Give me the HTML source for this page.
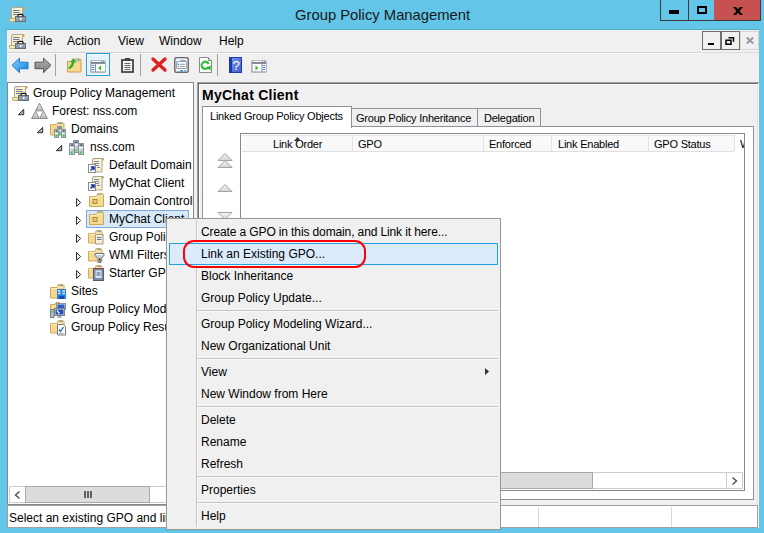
<!DOCTYPE html>
<html><head><meta charset="utf-8">
<style>
*{margin:0;padding:0;box-sizing:border-box}
html,body{width:764px;height:533px;overflow:hidden}
body{background:#63c5e7;position:relative;font-family:"Liberation Sans",sans-serif;font-size:12px;color:#000}
.a{position:absolute}
.t{position:absolute;white-space:nowrap;line-height:12px;font-size:12px}
.h{position:absolute;white-space:nowrap;line-height:11px;font-size:11px;letter-spacing:-0.22px}
svg{position:absolute;overflow:visible}
</style></head><body>

<!-- title bar -->
<svg style="left:9px;top:7px" width="17" height="15" viewBox="0 0 17 15">
 <path d="M2.5 1.5h11v10h-11z" fill="#f8f0c6" stroke="#b0a888"/>
 <path d="M2.5 1.5a1 1 0 0 1 1-1h10.5a1 1 0 0 1 0 2" fill="#fff8dc" stroke="#b0a888"/>
 <circle cx="14.3" cy="1.5" r="1.3" fill="#d8a050"/>
 <path d="M4 3.5h6.5M4 5.5h6.5M4 7.5h5" stroke="#7078a0"/>
 <path d="M0.5 11.5h6.5v3H1.5a1 1 0 0 1-1-1z" fill="#f4e6b0" stroke="#c0aa70"/>
 <rect x="6.5" y="9.5" width="10" height="5" fill="#8d99a7" stroke="#66707c"/>
 <path d="M7 11.5h9" stroke="#9aa6b4"/>
 <path d="M9 9.5v-1.2a1 1 0 0 1 1-1h3a1 1 0 0 1 1 1v1.2" fill="none" stroke="#1a1a1a" stroke-width="1.3"/>
 <rect x="11" y="11" width="1.5" height="2" fill="#fff"/>
</svg>
<div class="t" style="left:295px;top:8px;font-size:14.8px;line-height:15px;color:#1a1a1a">Group Policy Management</div>

<!-- caption buttons -->
<div class="a" style="left:660px;top:-1px;width:29px;height:22px;border:1px solid #3c3c3c;background:#63c5e7"></div>
<div class="a" style="left:688px;top:-1px;width:26px;height:22px;border:1px solid #3c3c3c;border-right:none;background:#63c5e7"></div>
<div class="a" style="left:714px;top:-1px;width:47px;height:22px;border:1px solid #3c3c3c;border-left:none;background:#c75050"></div>
<div class="a" style="left:669px;top:10px;width:10px;height:4px;background:#000"></div>
<div class="a" style="left:697px;top:6px;width:10px;height:8px;border:2px solid #000;border-top-width:2px"></div>
<svg style="left:733px;top:7px" width="10" height="8" viewBox="0 0 10 8"><path d="M0 0h3l2 2.3L7 0h3L6.5 4L10 8H7L5 5.7L3 8H0l3.5-4z" fill="#000"/></svg>

<!-- window client -->
<div class="a" style="left:7px;top:30px;width:752px;height:498px;background:#f0f0f0"></div>
<div class="a" style="left:6px;top:29px;width:753px;height:1px;background:#5aa9c8"></div>

<!-- menu bar -->
<div class="a" style="left:7px;top:52px;width:694px;height:1px;background:#d0d0d0"></div>
<div class="a" style="left:7px;top:53px;width:694px;height:1px;background:#fcfcfc"></div>
<div class="a" style="left:702px;top:52px;width:57px;height:1px;background:#dcdcdc"></div>
<svg style="left:9px;top:34px" width="17" height="15" viewBox="0 0 17 15">
 <path d="M2.5 1.5h11v10h-11z" fill="#f8f0c6" stroke="#b0a888"/>
 <path d="M2.5 1.5a1 1 0 0 1 1-1h10.5a1 1 0 0 1 0 2" fill="#fff8dc" stroke="#b0a888"/>
 <circle cx="14.3" cy="1.5" r="1.3" fill="#d8a050"/>
 <path d="M4 3.5h6.5M4 5.5h6.5M4 7.5h5" stroke="#7078a0"/>
 <path d="M0.5 11.5h6.5v3H1.5a1 1 0 0 1-1-1z" fill="#f4e6b0" stroke="#c0aa70"/>
 <rect x="6.5" y="9.5" width="10" height="5" fill="#8d99a7" stroke="#66707c"/>
 <path d="M7 11.5h9" stroke="#9aa6b4"/>
 <path d="M9 9.5v-1.2a1 1 0 0 1 1-1h3a1 1 0 0 1 1 1v1.2" fill="none" stroke="#1a1a1a" stroke-width="1.3"/>
 <rect x="11" y="11" width="1.5" height="2" fill="#fff"/>
</svg>
<div class="t" style="left:33px;top:35px">File</div>
<div class="t" style="left:67px;top:35px">Action</div>
<div class="t" style="left:118px;top:35px">View</div>
<div class="t" style="left:159px;top:35px">Window</div>
<div class="t" style="left:219px;top:35px">Help</div>

<!-- MDI buttons -->
<div class="a" style="left:702px;top:31px;width:19px;height:19px;border:1px solid #707070;background:#f0f0f0"></div>
<div class="a" style="left:721px;top:31px;width:19px;height:19px;border:1px solid #707070;background:#f0f0f0"></div>
<div class="a" style="left:740px;top:31px;width:19px;height:19px;border:1px solid #d6d6d6;background:#f0f0f0"></div>
<div class="a" style="left:708px;top:43px;width:6px;height:2px;background:#000"></div>
<svg style="left:725px;top:37px" width="10" height="9" viewBox="0 0 10 9"><path d="M3.5 0.75h5v4M1 3.25h5v4h-5z" fill="none" stroke="#000" stroke-width="1.5"/></svg>
<svg style="left:746px;top:37px" width="8" height="7" viewBox="0 0 8 7"><path d="M0.8 0.5L7.2 6.5M7.2 0.5L0.8 6.5" stroke="#8e9ba8" stroke-width="2"/></svg>

<!-- toolbar -->
<svg style="left:11px;top:57px" width="18" height="17" viewBox="0 0 18 17"><defs><linearGradient id="bg1" x1="0" y1="0" x2="1" y2="1"><stop offset="0" stop-color="#8ad4fa"/><stop offset="0.6" stop-color="#3aa4ec"/><stop offset="1" stop-color="#1a70c8"/></linearGradient></defs><path d="M1 8.3L8.5 1.2v4h8.5v6.5H8.5v4z" fill="url(#bg1)" stroke="#1c78cc" stroke-linejoin="round"/></svg>
<svg style="left:34px;top:57px" width="18" height="17" viewBox="0 0 18 17"><defs><linearGradient id="bg2" x1="0" y1="0" x2="0" y2="1"><stop offset="0" stop-color="#b4b4b4"/><stop offset="1" stop-color="#7a7a7a"/></linearGradient></defs><path d="M17 8.3L9.5 1.2v4H1v6.5h8.5v4z" fill="url(#bg2)" stroke="#555" stroke-linejoin="round"/></svg>
<div class="a" style="left:55px;top:54px;width:1px;height:22px;background:#a0a0a0"></div>
<svg style="left:67px;top:58px" width="15" height="15" viewBox="0 0 15 15"><path d="M0.5 3.5h7l1.2-2.5h4.3l1 1v12h-13.5z" fill="#f6d890" stroke="#c8a050"/><path d="M9.5 2.2h3.5" stroke="#58a4e0"/><path d="M2 10.5C3.5 9 6.5 8 6 3" stroke="#30b030" stroke-width="2.4" fill="none"/><path d="M3 4L6.5 0L9.5 4.5z" fill="#30b030"/></svg>
<div class="a" style="left:86px;top:53px;width:24px;height:23px;border:1px solid #26a0da;background:#e5f1fb;box-shadow:inset 0 0 0 1px #f4faff"></div>
<svg style="left:90px;top:60px" width="16" height="13" viewBox="0 0 16 13"><rect x="0.5" y="0.5" width="15" height="12" fill="#7a828a"/><path d="M1.5 1.5h9.5M12 1.5h1M14 1.5h0.8" stroke="#fff"/><rect x="1" y="3" width="14" height="9" fill="#8a9098"/><rect x="1.5" y="4" width="3.5" height="7.5" fill="#f8f8f8"/><rect x="6" y="4" width="9" height="7.5" fill="#fbfbfb"/><path d="M2.2 5.5h2M2.2 7.5h2M2.2 9.5h2" stroke="#3a7ac8" stroke-width="1"/><path d="M11 5.5v5l-3-2.5z" fill="#34c034"/></svg>
<svg style="left:121px;top:58px" width="13" height="15" viewBox="0 0 13 15"><rect x="1" y="2" width="11" height="12" fill="#f8f8f8" stroke="#444" stroke-width="1.8"/><rect x="4" y="0" width="5" height="3" fill="#444"/><path d="M3.5 5.5h6M3.5 7.5h6M3.5 9.5h6M3.5 11.5h6" stroke="#666"/></svg>
<div class="a" style="left:140px;top:54px;width:1px;height:22px;background:#a0a0a0"></div>
<svg style="left:151px;top:57px" width="16" height="15" viewBox="0 0 16 15"><path d="M2 2L14 13M14 2L2 13" stroke="#e02020" stroke-width="3.4" stroke-linecap="round"/></svg>
<svg style="left:174px;top:57px" width="15" height="16" viewBox="0 0 15 16"><rect x="0.75" y="0.75" width="13.5" height="14.5" rx="1.5" fill="#fdfdfd" stroke="#6c6c6c" stroke-width="1.5"/><path d="M2 1.8h10" stroke="#c8d4e0"/><path d="M2.5 4.5h10v7h-10z" fill="#fff" stroke="#93a3b8"/><path d="M6.5 4.5v-1h5v1" fill="none" stroke="#93a3b8"/><rect x="3.5" y="6.5" width="1.5" height="1.5" fill="#1a90f0"/><rect x="3.5" y="9" width="1.5" height="1.2" fill="#999"/><path d="M6 7.3h5M6 9.6h5" stroke="#9a9a9a"/><rect x="6" y="13" width="3" height="1.8" fill="#2aa8f0"/><rect x="10" y="13" width="2.5" height="1.8" fill="#aaa"/></svg>
<svg style="left:199px;top:57px" width="13" height="16" viewBox="0 0 13 16"><path d="M0.5 0.5h9l3 3v12h-12z" fill="#fbfbfb" stroke="#8a8a8a"/><path d="M9.5 0.5v3h3" fill="#e8e8e8" stroke="#8a8a8a"/><path d="M9.3 10.2A3.6 3.6 0 1 1 9.6 7" fill="none" stroke="#38c038" stroke-width="2.2"/><path d="M7.5 10.5L11.5 13.5L11.8 8.5z" fill="#22b022"/></svg>
<div class="a" style="left:217px;top:54px;width:1px;height:22px;background:#a0a0a0"></div>
<svg style="left:229px;top:57px" width="13" height="16" viewBox="0 0 13 16"><defs><linearGradient id="hg" x1="0" y1="0" x2="1" y2="1"><stop offset="0" stop-color="#7090f0"/><stop offset="1" stop-color="#4060c8"/></linearGradient></defs><rect x="0" y="0" width="13" height="16" fill="#1c3cb0"/><rect x="3" y="1" width="9" height="14" fill="url(#hg)"/><text x="7.3" y="13" font-family="Liberation Sans" font-size="13.5" fill="#fff" text-anchor="middle">?</text></svg>
<svg style="left:251px;top:60px" width="16" height="13" viewBox="0 0 16 13"><rect x="0.5" y="0.5" width="15" height="12" fill="#7a828a"/><path d="M1.5 1.5h9.5M12 1.5h1M14 1.5h0.8" stroke="#fff"/><rect x="1" y="3" width="14" height="9" fill="#8a9098"/><rect x="1.5" y="4" width="9" height="7.5" fill="#fbfbfb"/><rect x="11.5" y="4" width="3.5" height="7.5" fill="#f8f8f8"/><path d="M12.2 5.5h2M12.2 7.5h2M12.2 9.5h2" stroke="#3a7ac8" stroke-width="1"/><path d="M4.5 5.5v5l3-2.5z" fill="#34c034"/></svg>

<!-- tree pane -->
<div class="a" style="left:7px;top:82px;width:187px;height:423px;border:1px solid #828790;background:#fff"></div>


<!-- tree content -->
<div class="a" style="left:0;top:0;width:764px;height:533px;clip-path:polygon(8px 83px,193px 83px,193px 486px,8px 486px)">
<div class="a" style="left:86px;top:210px;width:103px;height:18px;background:#d7e8f8;border:1px solid #80a8d8"></div>
<svg style="left:12px;top:86px" width="17" height="15" viewBox="0 0 17 15">
 <path d="M2.5 1.5h11v10h-11z" fill="#f8f0c6" stroke="#b0a888"/>
 <path d="M2.5 1.5a1 1 0 0 1 1-1h10.5a1 1 0 0 1 0 2" fill="#fff8dc" stroke="#b0a888"/>
 <circle cx="14.3" cy="1.5" r="1.3" fill="#d8a050"/>
 <path d="M4 3.5h6.5M4 5.5h6.5M4 7.5h5" stroke="#7078a0"/>
 <path d="M0.5 11.5h6.5v3H1.5a1 1 0 0 1-1-1z" fill="#f4e6b0" stroke="#c0aa70"/>
 <rect x="6.5" y="9.5" width="10" height="5" fill="#8d99a7" stroke="#66707c"/>
 <path d="M7 11.5h9" stroke="#9aa6b4"/>
 <path d="M9 9.5v-1.2a1 1 0 0 1 1-1h3a1 1 0 0 1 1 1v1.2" fill="none" stroke="#1a1a1a" stroke-width="1.3"/>
 <rect x="11" y="11" width="1.5" height="2" fill="#fff"/>
</svg>
<div class="t" style="left:33px;top:87px">Group Policy Management</div>

<svg style="left:18px;top:109px" width="7" height="7" viewBox="0 0 7 7"><path d="M5.7 0.3V5.7H0.3z" fill="#b0b0b0" stroke="#303030" stroke-linejoin="round"/></svg>
<svg style="left:31px;top:103px" width="17" height="16" viewBox="0 0 17 16"><defs><linearGradient id="fg" x1="0" y1="0" x2="0" y2="1"><stop offset="0" stop-color="#f0f0f0"/><stop offset="1" stop-color="#b4b4b4"/></linearGradient></defs><path d="M8.5 0.3L12.4 7.8H4.6z" fill="url(#fg)" stroke="#8c8c8c"/><path d="M4.5 8.2L8.4 15.5H0.6z" fill="url(#fg)" stroke="#8c8c8c"/><path d="M12.5 8.2L16.4 15.5H8.6z" fill="url(#fg)" stroke="#8c8c8c"/></svg>
<div class="t" style="left:52px;top:105px">Forest: nss.com</div>

<svg style="left:37px;top:127px" width="7" height="7" viewBox="0 0 7 7"><path d="M5.7 0.3V5.7H0.3z" fill="#b0b0b0" stroke="#303030" stroke-linejoin="round"/></svg>
<svg style="left:50px;top:122px" width="17" height="16" viewBox="0 0 17 16"><defs><linearGradient id="sg" x1="0" y1="0" x2="1" y2="0"><stop offset="0" stop-color="#e4e9ee"/><stop offset="1" stop-color="#aab6c2"/></linearGradient></defs><path d="M0.5 2.5h6l1-2h5.5l1 1v11.5h-13.5z" fill="#f6d890" stroke="#d0aa58"/><path d="M8.5 1.5h4" stroke="#60a8e0"/><rect x="7.5" y="4.5" width="4" height="8" fill="url(#sg)" stroke="#8894a0"/><rect x="8.5" y="5.5" width="2" height="1.2" fill="#2a323a"/><rect x="8" y="8" width="3" height="1.5" fill="#f4f6f8"/><rect x="8.5" y="9.5" width="2" height="2" fill="#30d030"/><rect x="4.5" y="7.5" width="4" height="8" fill="url(#sg)" stroke="#8894a0"/><rect x="5.5" y="8.5" width="2" height="1.2" fill="#2a323a"/><rect x="5" y="11" width="3" height="1.5" fill="#f4f6f8"/><rect x="5.5" y="12.5" width="2" height="2" fill="#30d030"/><rect x="11.5" y="7.5" width="4" height="8" fill="url(#sg)" stroke="#8894a0"/><rect x="12.5" y="8.5" width="2" height="1.2" fill="#2a323a"/><rect x="12" y="11" width="3" height="1.5" fill="#f4f6f8"/><rect x="12.5" y="12.5" width="2" height="2" fill="#30d030"/></svg>
<div class="t" style="left:71px;top:123px">Domains</div>

<svg style="left:56px;top:145px" width="7" height="7" viewBox="0 0 7 7"><path d="M5.7 0.3V5.7H0.3z" fill="#b0b0b0" stroke="#303030" stroke-linejoin="round"/></svg>
<svg style="left:69px;top:140px" width="16" height="16" viewBox="0 0 16 16"><rect x="4.5" y="0.5" width="5" height="12" fill="url(#sg)" stroke="#8894a0"/><rect x="5.5" y="1.5" width="3" height="1.2" fill="#2a323a"/><rect x="5" y="4" width="4" height="1.5" fill="#f4f6f8"/><rect x="5.5" y="9.5" width="2" height="2" fill="#30d030"/><rect x="0.5" y="3.5" width="5" height="11" fill="url(#sg)" stroke="#8894a0"/><rect x="1.5" y="4.5" width="3" height="1.2" fill="#2a323a"/><rect x="1" y="7" width="4" height="1.5" fill="#f4f6f8"/><rect x="1.5" y="11.5" width="2" height="2" fill="#30d030"/><rect x="9.5" y="3.5" width="5" height="11" fill="url(#sg)" stroke="#8894a0"/><rect x="10.5" y="4.5" width="3" height="1.2" fill="#2a323a"/><rect x="10" y="7" width="4" height="1.5" fill="#f4f6f8"/><rect x="10.5" y="11.5" width="2" height="2" fill="#30d030"/></svg>
<div class="t" style="left:90px;top:141px">nss.com</div>

<svg style="left:88px;top:158px" width="16" height="16" viewBox="0 0 16 16">
 <path d="M4.5 1.5h9.5v12.5h-9.5z" fill="#f8f0c6" stroke="#aaa290"/>
 <path d="M4.5 1.5a1 1 0 0 1 1-1h9a1 1 0 0 1 0 2" fill="#fff8dc" stroke="#aaa290"/>
 <circle cx="14.5" cy="1.3" r="1" fill="#c89048"/>
 <path d="M6 3.5h5M6 5.5h5M6 7.5h5M9 9.5h3" stroke="#8088a8"/>
 <rect x="0.5" y="6.5" width="7" height="8" fill="#fff" stroke="#8c8c8c"/>
 <path d="M2.5 12.5L5.5 9.5M2.8 9h3.2v3.2" stroke="#1a2c9a" stroke-width="1.5" fill="none"/>
</svg>
<div class="t" style="left:109px;top:159px">Default Domain Policy</div>

<svg style="left:88px;top:176px" width="16" height="16" viewBox="0 0 16 16">
 <path d="M4.5 1.5h9.5v12.5h-9.5z" fill="#f8f0c6" stroke="#aaa290"/>
 <path d="M4.5 1.5a1 1 0 0 1 1-1h9a1 1 0 0 1 0 2" fill="#fff8dc" stroke="#aaa290"/>
 <circle cx="14.5" cy="1.3" r="1" fill="#c89048"/>
 <path d="M6 3.5h5M6 5.5h5M6 7.5h5M9 9.5h3" stroke="#8088a8"/>
 <rect x="0.5" y="6.5" width="7" height="8" fill="#fff" stroke="#8c8c8c"/>
 <path d="M2.5 12.5L5.5 9.5M2.8 9h3.2v3.2" stroke="#1a2c9a" stroke-width="1.5" fill="none"/>
</svg>
<div class="t" style="left:109px;top:177px">MyChat Client</div>

<svg style="left:76px;top:198px" width="6" height="9" viewBox="0 0 6 9"><path d="M0.6 0.5L4.6 4.5L0.6 8.5z" fill="#fff" stroke="#202020" stroke-linejoin="round"/></svg>
<svg style="left:89px;top:193px" width="15" height="14" viewBox="0 0 15 14">
 <path d="M0.5 3.5h7l1-3h5l1 1v12h-14z" fill="#f6dc92" stroke="#cfa956"/>
 <path d="M9 2h4.5" stroke="#5aa8e0"/>
 <path d="M1 4.5h6.5l1-1.5h5.5" stroke="#fff2c8" fill="none"/>
 <rect x="3.5" y="6" width="5" height="5" fill="#b08838"/>
 <rect x="4.5" y="7" width="3" height="3" fill="#e8c878"/>
</svg>
<div class="t" style="left:109px;top:195px">Domain Controllers</div>

<svg style="left:76px;top:216px" width="6" height="9" viewBox="0 0 6 9"><path d="M0.6 0.5L4.6 4.5L0.6 8.5z" fill="#fff" stroke="#202020" stroke-linejoin="round"/></svg>
<svg style="left:89px;top:211px" width="15" height="14" viewBox="0 0 15 14">
 <path d="M0.5 3.5h7l1-3h5l1 1v12h-14z" fill="#f6dc92" stroke="#cfa956"/>
 <path d="M9 2h4.5" stroke="#5aa8e0"/>
 <path d="M1 4.5h6.5l1-1.5h5.5" stroke="#fff2c8" fill="none"/>
 <rect x="3.5" y="6" width="5" height="5" fill="#b08838"/>
 <rect x="4.5" y="7" width="3" height="3" fill="#e8c878"/>
</svg>
<div class="t" style="left:109px;top:213px">MyChat Client</div>

<svg style="left:76px;top:234px" width="6" height="9" viewBox="0 0 6 9"><path d="M0.6 0.5L4.6 4.5L0.6 8.5z" fill="#fff" stroke="#202020" stroke-linejoin="round"/></svg>
<svg style="left:88px;top:230px" width="17" height="15" viewBox="0 0 17 15"><path d="M0.5 3.5h6.5l1.2-3h4.8l1 1v11.5h-13.5z" fill="#f6d890" stroke="#d2ac5a"/><path d="M1 4.5h6.5l1-1.5h5" stroke="#fff0c0" fill="none"/><path d="M9.5 1.6h3.5" stroke="#58a4e0"/><path d="M7.5 4.5h7.5v9.5h-7.5z" fill="#f8f2d8" stroke="#a09a88"/><path d="M14.5 4.5a1 1 0 0 1 1 1" stroke="#c89048" fill="none"/><path d="M9 7.5h4.5M9 9.5h4.5" stroke="#6070a0"/></svg>
<div class="t" style="left:109px;top:231px">Group Policy Objects</div>

<svg style="left:76px;top:252px" width="6" height="9" viewBox="0 0 6 9"><path d="M0.6 0.5L4.6 4.5L0.6 8.5z" fill="#fff" stroke="#202020" stroke-linejoin="round"/></svg>
<svg style="left:88px;top:248px" width="17" height="15" viewBox="0 0 17 15"><path d="M0.5 3.5h6.5l1.2-3h4.8l1 1v11.5h-13.5z" fill="#f6d890" stroke="#d2ac5a"/><path d="M1 4.5h6.5l1-1.5h5" stroke="#fff0c0" fill="none"/><path d="M9.5 1.6h3.5" stroke="#58a4e0"/><path d="M7 5.5h9v2l-3 3v4h-3v-4l-3-3z" fill="#c8d0dc" stroke="#6a7684"/><path d="M8 6.5h7" stroke="#fff"/><path d="M11 10.5h1v3" stroke="#4a5664"/></svg>
<div class="t" style="left:109px;top:249px">WMI Filters</div>

<svg style="left:76px;top:270px" width="6" height="9" viewBox="0 0 6 9"><path d="M0.6 0.5L4.6 4.5L0.6 8.5z" fill="#fff" stroke="#202020" stroke-linejoin="round"/></svg>
<svg style="left:88px;top:265px" width="17" height="16" viewBox="0 0 17 16"><path d="M0.5 3.5h6.5l1.2-3h4.8l1 1v11.5h-13.5z" fill="#f6d890" stroke="#d2ac5a"/><path d="M1 4.5h6.5l1-1.5h5" stroke="#fff0c0" fill="none"/><path d="M9.5 1.6h3.5" stroke="#58a4e0"/><rect x="5.5" y="3.5" width="10" height="12" fill="#7a8aa8" stroke="#505c70"/><path d="M5.5 3.5h10" stroke="#a04030"/><rect x="7.5" y="5.5" width="6" height="7.5" fill="#dde6f4"/><path d="M8.5 8h4M8.5 10h4" stroke="#3a5a9a"/></svg>
<div class="t" style="left:109px;top:267px">Starter GPOs</div>

<svg style="left:50px;top:284px" width="17" height="16" viewBox="0 0 17 16"><path d="M0.5 3.5h6.5l1.2-3h4.8l1 1v12.5h-13.5z" fill="#f6d890" stroke="#d2ac5a"/><path d="M1 4.5h6.5l1-1.5h5" stroke="#fff0c0" fill="none"/><path d="M9.5 1.6h3.5" stroke="#58a4e0"/><rect x="7" y="5" width="9" height="10" fill="#2a7ee0"/><path d="M8 7h2.5M12.5 7h2.5M8 9.5h2.5M12.5 9.5h2.5" stroke="#e8f4ff" stroke-width="1.3"/><rect x="9" y="12" width="5" height="3" fill="#1050b0"/></svg>
<div class="t" style="left:71px;top:285px">Sites</div>

<svg style="left:50px;top:302px" width="17" height="16" viewBox="0 0 17 16"><path d="M0.5 2.5h4.5l1-2h3.5l1 1v8h-10z" fill="#f6d890" stroke="#d2ac5a"/><rect x="6.5" y="1.5" width="9" height="6" fill="#d8dee4" stroke="#8a929a"/><rect x="7.5" y="2.5" width="7" height="4" fill="#2a5ec0"/><rect x="4.5" y="6.5" width="10" height="7" fill="#dfe4ea" stroke="#7a828a"/><rect x="5.5" y="7.5" width="8" height="5" fill="#1e50b8"/><path d="M7 8.5l2.5 3" stroke="#fff" stroke-width="1.2"/><path d="M7.5 15h4" stroke="#707a84" stroke-width="1.2"/><rect x="0.5" y="7.5" width="3.5" height="8" fill="#b8c0c8" stroke="#7a828a"/><rect x="1.2" y="9" width="2" height="1.5" fill="#40d040"/></svg>
<div class="t" style="left:71px;top:303px">Group Policy Modeling</div>

<svg style="left:50px;top:320px" width="17" height="16" viewBox="0 0 17 16"><path d="M0.5 3.5h6.5l1.2-3h4.8l1 1v11.5h-13.5z" fill="#f6d890" stroke="#d2ac5a"/><path d="M1 4.5h6.5l1-1.5h5" stroke="#fff0c0" fill="none"/><path d="M9.5 1.6h3.5" stroke="#58a4e0"/><path d="M7.5 4.5h6l2 2v8.5h-8z" fill="#fbfbfb" stroke="#7a7a7a"/><path d="M9 9.5l1.5 2 3-4.5" stroke="#1a66c8" stroke-width="1.3" fill="none"/><path d="M9 13.5h4.5" stroke="#9aa"/></svg>
<div class="t" style="left:71px;top:321px">Group Policy Results</div>

</div>
<!-- tree scrollbar -->
<div class="a" style="left:9px;top:486px;width:184px;height:17px;background:#fff;border:1px solid #cdcdcd;border-right:none"></div>
<div class="a" style="left:9px;top:486px;width:17px;height:17px;border:1px solid #cdcdcd"></div>
<svg style="left:14px;top:491px" width="7" height="8" viewBox="0 0 7 8"><path d="M5.5 0.5L1.5 4L5.5 7.5" stroke="#505050" stroke-width="1.4" fill="none"/></svg>
<div class="a" style="left:25px;top:486px;width:125px;height:17px;background:#dcdcdc;border:1px solid #a8a8a8"></div>
<div class="a" style="left:84px;top:491px;width:2px;height:7px;background:#606060"></div>
<div class="a" style="left:87px;top:491px;width:2px;height:7px;background:#606060"></div>
<div class="a" style="left:90px;top:491px;width:2px;height:7px;background:#606060"></div>
<!-- right pane -->
<div class="a" style="left:197px;top:82px;width:562px;height:422px;border-top:1px solid #a0a0a0;border-left:1px solid #a0a0a0;background:#f0f0f0"></div>
<div class="a" style="left:198px;top:83px;width:561px;height:421px;border-top:1px solid #696969;border-left:1px solid #696969"></div>
<div class="a" style="left:199px;top:84px;width:560px;height:420px;border-top:1px solid #fff;border-left:1px solid #fff"></div>
<div class="a" style="left:757px;top:84px;width:1px;height:420px;background:#e3e3e3"></div>
<div class="a" style="left:758px;top:83px;width:1px;height:421px;background:#fff"></div>


<div class="t" style="left:202px;top:88px;font-size:14px;line-height:14px;font-weight:bold;letter-spacing:0.25px">MyChat Client</div>
<!-- tab page -->
<div class="a" style="left:202px;top:126px;width:552px;height:374px;background:#fff;border:1px solid #8e9298"></div>
<!-- inactive tabs -->
<div class="a" style="left:350px;top:108px;width:128px;height:19px;background:#f0f0f0;border:1px solid #8e9298"></div>
<div class="a" style="left:477px;top:108px;width:64px;height:19px;background:#f0f0f0;border:1px solid #8e9298"></div>
<div class="h" style="left:356px;top:113px">Group Policy Inheritance</div>
<div class="h" style="left:484px;top:113px">Delegation</div>
<!-- active tab -->
<div class="a" style="left:202px;top:106px;width:150px;height:22px;background:#fff;border:1px solid #8e9298;border-bottom:none"></div>
<div class="h" style="left:210px;top:111px">Linked Group Policy Objects</div>
<!-- arrows -->
<svg style="left:217px;top:153px" width="16" height="16" viewBox="0 0 16 16">
 <defs><linearGradient id="ag" x1="0" y1="0" x2="0" y2="1"><stop offset="0" stop-color="#f4f4f4"/><stop offset="1" stop-color="#d4d4d4"/></linearGradient></defs>
 <path d="M8 7.5L15 14.5H1z" fill="url(#ag)" stroke="#a4a4a4"/>
 <path d="M8 0.5L15 7.5H1z" fill="url(#ag)" stroke="#a4a4a4"/>
</svg>
<svg style="left:217px;top:184px" width="16" height="8" viewBox="0 0 16 8"><path d="M8 0.5L15 7.5H1z" fill="url(#ag)" stroke="#a4a4a4"/></svg>
<svg style="left:217px;top:212px" width="16" height="8" viewBox="0 0 16 8"><path d="M8 7.5L15 0.5H1z" fill="url(#ag)" stroke="#a4a4a4"/></svg>
<!-- list view -->
<div class="a" style="left:240px;top:133px;width:505px;height:358px;background:#fff;border:1px solid #828790"></div>
<div class="a" style="left:242px;top:135px;width:492px;height:17px;background:#f9f9f9;border-top:1px solid #e6e6e6;border-bottom:1px solid #e0e0e0"></div>
<div class="a" style="left:352px;top:135px;width:1px;height:16px;background:#e3e3e3"></div>
<div class="a" style="left:483px;top:135px;width:1px;height:16px;background:#e3e3e3"></div>
<div class="a" style="left:551px;top:135px;width:1px;height:16px;background:#e3e3e3"></div>
<div class="a" style="left:648px;top:135px;width:1px;height:16px;background:#e3e3e3"></div>
<div class="a" style="left:734px;top:135px;width:1px;height:16px;background:#e3e3e3"></div>
<div class="h" style="left:273px;top:139px">Link Order</div>
<svg style="left:294px;top:137px" width="7" height="4" viewBox="0 0 7 4"><path d="M0 4L3.5 0L7 4z" fill="#333"/></svg>
<div class="h" style="left:358px;top:139px">GPO</div>
<div class="h" style="left:489px;top:139px">Enforced</div>
<div class="h" style="left:558px;top:139px">Link Enabled</div>
<div class="h" style="left:654px;top:139px">GPO Status</div>
<div class="a" style="left:740px;top:139px;width:4px;height:11px;overflow:hidden"><div class="h" style="left:0;top:0">W</div></div>
<!-- list h scrollbar -->
<div class="a" style="left:241px;top:472px;width:502px;height:17px;background:#fff;border-top:1px solid #cdcdcd;border-bottom:1px solid #cdcdcd"></div>
<div class="a" style="left:300px;top:472px;width:293px;height:17px;background:#dcdcdc;border:1px solid #a8a8a8"></div>
<div class="a" style="left:726px;top:472px;width:17px;height:17px;background:#fff;border:1px solid #cdcdcd"></div>
<svg style="left:731px;top:477px" width="7" height="8" viewBox="0 0 7 8"><path d="M1.5 0.5L5.5 4L1.5 7.5" stroke="#505050" stroke-width="1.4" fill="none"/></svg>
<!-- status bar -->

<div class="a" style="left:7px;top:505px;width:751px;height:23px;background:#fff;border:1px solid #a0a0a0"></div>
<div class="a" style="left:538px;top:507px;width:1px;height:20px;background:#d8d8d8"></div>
<div class="a" style="left:671px;top:507px;width:1px;height:20px;background:#d8d8d8"></div>
<div class="t" style="left:9px;top:512px">Select an existing GPO and link it to this container</div>


<!-- context menu -->
<div class="a" style="left:166px;top:218px;width:335px;height:312px;background:#f0f0f0;border:1px solid #979797"></div>
<div class="a" style="left:196px;top:220px;width:1px;height:307px;background:#c6c6c6"></div>
<div class="a" style="left:197px;top:220px;width:1px;height:307px;background:#f7f7f7"></div>
<div class="a" style="left:169px;top:243px;width:329px;height:22px;background:#dcebfc;border:1px solid #26a0da"></div>
<div class="a" style="left:197px;top:310px;width:301px;height:1px;background:#c6c6c6"></div>
<div class="a" style="left:197px;top:311px;width:301px;height:1px;background:#f7f7f7"></div>
<div class="a" style="left:197px;top:358px;width:301px;height:1px;background:#c6c6c6"></div>
<div class="a" style="left:197px;top:359px;width:301px;height:1px;background:#f7f7f7"></div>
<div class="a" style="left:197px;top:406px;width:301px;height:1px;background:#c6c6c6"></div>
<div class="a" style="left:197px;top:407px;width:301px;height:1px;background:#f7f7f7"></div>
<div class="a" style="left:197px;top:476px;width:301px;height:1px;background:#c6c6c6"></div>
<div class="a" style="left:197px;top:477px;width:301px;height:1px;background:#f7f7f7"></div>
<div class="a" style="left:197px;top:502px;width:301px;height:1px;background:#c6c6c6"></div>
<div class="a" style="left:197px;top:503px;width:301px;height:1px;background:#f7f7f7"></div>
<div class="t" style="left:201px;top:226px;letter-spacing:-0.12px">Create a GPO in this domain, and Link it here...</div>
<div class="t" style="left:201px;top:248px">Link an Existing GPO...</div>
<div class="t" style="left:201px;top:270px">Block Inheritance</div>
<div class="t" style="left:201px;top:292px">Group Policy Update...</div>
<div class="t" style="left:201px;top:318px">Group Policy Modeling Wizard...</div>
<div class="t" style="left:201px;top:340px">New Organizational Unit</div>
<div class="t" style="left:201px;top:366px">View</div>
<svg style="left:485px;top:368px" width="4" height="7" viewBox="0 0 4 7"><path d="M0 0L4 3.5L0 7z" fill="#333"/></svg>
<div class="t" style="left:201px;top:388px">New Window from Here</div>
<div class="t" style="left:201px;top:414px">Delete</div>
<div class="t" style="left:201px;top:436px">Rename</div>
<div class="t" style="left:201px;top:458px">Refresh</div>
<div class="t" style="left:201px;top:484px">Properties</div>
<div class="t" style="left:201px;top:510px">Help</div>
<!-- red highlight -->
<div class="a" style="left:183px;top:240px;width:183px;height:28px;border:2.4px solid #f00;border-radius:11px"></div>

</body></html>
